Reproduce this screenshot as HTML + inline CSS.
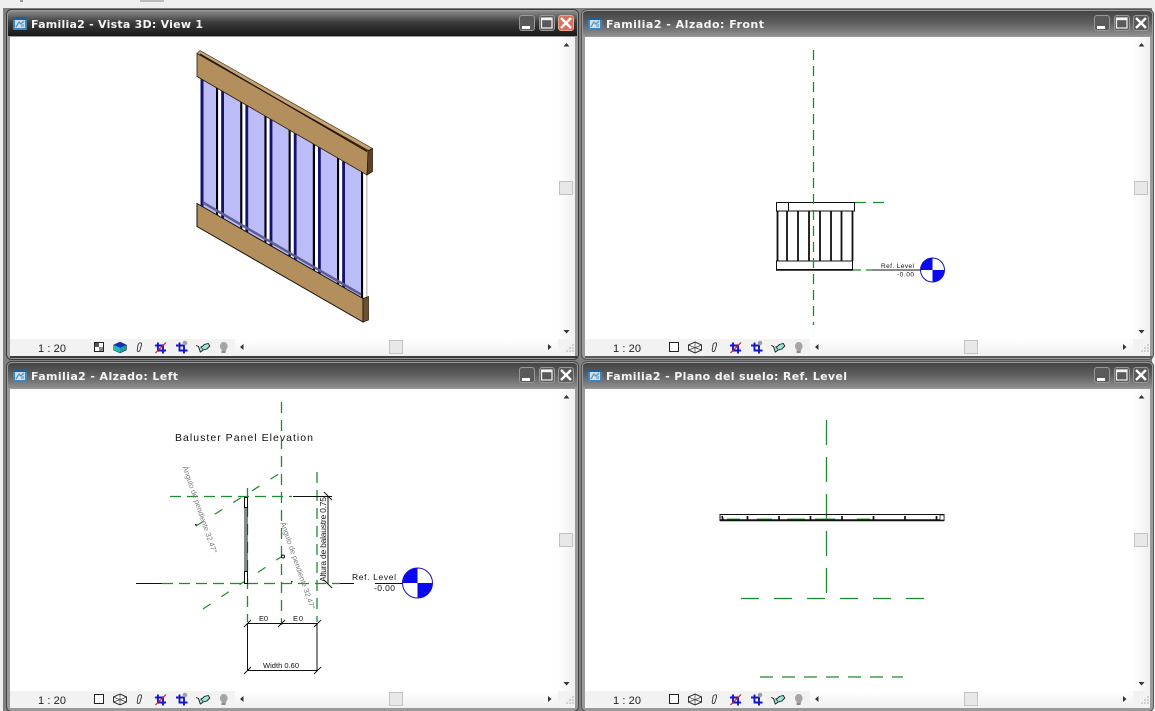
<!DOCTYPE html>
<html>
<head>
<meta charset="utf-8">
<title>Familia2</title>
<style>
html,body{margin:0;padding:0;background:#f0f0f0;overflow:hidden}
svg{display:block}
.t{font-family:"DejaVu Sans",sans-serif;font-weight:bold;font-size:11px;fill:#f4f4f4}
.s{font-family:"Liberation Sans",sans-serif;font-size:11px;fill:#222}
.l{font-family:"Liberation Sans",sans-serif;fill:#111}
.g{font-family:"Liberation Sans",sans-serif;font-size:7.500px;fill:#7c7c7c}
</style>
</head>
<body>
<svg width="1155" height="711" viewBox="0 0 1155 711" xmlns="http://www.w3.org/2000/svg">
<defs>
<linearGradient id="ta" x1="0" y1="0" x2="0" y2="1"><stop offset="0" stop-color="#8a8a8a"/><stop offset=".45" stop-color="#3c3c3c"/><stop offset="1" stop-color="#181818"/></linearGradient>
<linearGradient id="ti" x1="0" y1="0" x2="0" y2="1"><stop offset="0" stop-color="#444"/><stop offset=".5" stop-color="#606060"/><stop offset="1" stop-color="#8f8f8f"/></linearGradient>
<linearGradient id="sb" x1="0" y1="0" x2="1" y2="0"><stop offset="0" stop-color="#fff"/><stop offset="1" stop-color="#f0f0f0"/></linearGradient>
<linearGradient id="sh" x1="0" y1="0" x2="0" y2="1"><stop offset="0" stop-color="#fff"/><stop offset="1" stop-color="#f0f0f0"/></linearGradient>

<g id="appicon">
  <rect x="0" y="0" width="14" height="13" rx="1.500" fill="#3a86c0"/>
  <rect x="0" y="0" width="14" height="3" rx="1" fill="#1f5f98"/>
  <rect x="2" y="3" width="10" height="8" fill="#cfe0ee"/>
  <path d="M3 10l3-5 2 2 3-3" stroke="#5a93bd" stroke-width="1.300" fill="none"/>
  <rect x="8" y="7" width="3" height="3" fill="#8db4d2"/>
</g>

<g id="bmin"><rect x=".5" y=".5" width="15" height="15" rx="2.500" fill="#5a5a5a" stroke="#989898"/><rect x="3" y="11" width="8" height="3" fill="#fff"/></g>
<g id="bmax"><rect x=".5" y=".5" width="15" height="15" rx="2.500" fill="#5a5a5a" stroke="#989898"/><rect x="2.500" y="3" width="10.500" height="10" fill="none" stroke="#f4f4f4" stroke-width="1.200"/><rect x="2.500" y="3" width="10.500" height="2.200" fill="#f4f4f4"/></g>
<g id="bclose"><rect x=".5" y=".5" width="15" height="15" rx="2.500" fill="#5a5a5a" stroke="#989898"/><path d="M3 3l10 10M13 3L3 13" stroke="#fff" stroke-width="2.400"/></g>
<g id="bcloser"><rect x=".5" y=".5" width="15" height="15" rx="2.500" fill="#d9705c" stroke="#e8a598"/><path d="M3 3l10 10M13 3L3 13" stroke="#fff" stroke-width="2.400"/></g>

<g id="tools">
  <path d="M139.500 343c1.800-.6 2.500.4 2 2l-1.500 5c-.6 2-3 2.200-2.800 0l.8-5c.2-1 .6-1.600 1.500-2z" fill="none" stroke="#333" stroke-width=".9"/>
  <!-- crop off -->
  <path d="M158 342.500v8h8M155 345.500h8v8" fill="none" stroke="#1515c8" stroke-width="1.900"/>
  <path d="M155.500 353l10.500-10.500" stroke="#c02030" stroke-width="1.200"/>
  <!-- crop region -->
  <path d="M179.500 342.500v8h8M176 345.500h8v8" fill="none" stroke="#1515c8" stroke-width="1.900"/>
  <circle cx="185" cy="343" r="2.300" fill="#a0a0a0"/>
  <!-- glasses -->
  <path d="M196 345.500l2.500 1 1.800 5.500 3-2 3.500-1 3-3-1.500-2.500-4 1-2 2-2 .5" fill="#9ee6da" stroke="#1a1a1a" stroke-width=".9"/>
  <path d="M201 347l2 2.500" stroke="#1a1a1a" stroke-width=".7"/>
  <!-- bulb -->
  <path d="M223.500 342c3 0 4.500 2.500 4 5-.4 2-1.500 2.500-1.500 4.500h-4c0-2-2-3-2-5 0-2.500 1.500-4.500 3.500-4.500z" fill="#a4a4a4"/>
  <rect x="221.500" y="351" width="4" height="2" fill="#8a8a8a"/>
</g>

<g id="cubew">
  <path d="M120 342l6.500 3v5l-6.500 3-6.500-3v-5z" fill="#fff" stroke="#333" stroke-width="1"/>
  <path d="M113.500 345l6.500 2.800 6.500-2.800M120 342v11M113.500 350l6.500-2.500 6.500 2.500" fill="none" stroke="#333" stroke-width=".7"/>
</g>
<g id="cubes">
  <path d="M120 342l6.500 3v5l-6.500 3-6.500-3v-5z" fill="#1c9aa8" stroke="#123" stroke-width=".5"/>
  <path d="M113.500 345l6.500-3 6.500 3-6.500 2.800z" fill="#1530b0"/>
  <path d="M113.500 345l6.500 2.800v5l-6.500-3z" fill="#20b8b0"/>
</g>

<g id="scroll">
  <rect x="558" y="37" width="17" height="302" fill="url(#sb)"/>
  <path d="M563.500 46.500l3-3.500 3 3.500z" fill="#333"/>
  <path d="M563.500 330l3 3.500 3-3.500z" fill="#333"/>
  <rect x="559.500" y="181.500" width="13" height="13" fill="#e8e8e8" stroke="#c4c4c4"/>
  <rect x="10" y="339" width="565" height="17" fill="#f2f2f2"/>
  <rect x="235" y="339" width="323" height="17" fill="url(#sh)"/>
  <path d="M243.500 344l-3.500 3 3.500 3z" fill="#333"/>
  <path d="M548 344l3.500 3-3.500 3z" fill="#333"/>
  <rect x="389.500" y="340.500" width="13" height="13" fill="#e8e8e8" stroke="#c4c4c4"/>
  <path d="M572 344h2v2h-2zM569 347h2v2h-2zM572 347h2v2h-2zM566 350h2v2h-2zM569 350h2v2h-2zM572 350h2v2h-2z" fill="#cfcfcf"/>
</g>
</defs>

<rect width="1155" height="711" fill="#efefef"/>
<rect x="3" y="8" width="1149" height="703" fill="#808080"/>
<rect x="20" y="0" width="3" height="2" fill="#999"/>
<rect x="140" y="0" width="24" height="2" fill="#bbb"/>

<!-- WINDOW 1 -->
<rect x="6.500" y="9.500" width="572" height="350" rx="5" fill="#9a9a9a" stroke="#3a3a3a"/>
<path d="M8 36V15q0-4 4-4h561q4 0 4 4v21z" fill="url(#ta)"/>
<rect x="10" y="37" width="565" height="319" fill="#fff"/>
<rect x="10" y="356" width="567" height="2" fill="#3c3c3c"/>
<use href="#scroll"/>
<use href="#appicon" x="13" y="17"/>
<text class="t" x="31" y="28" textLength="172" lengthAdjust="spacing">Familia2 - Vista 3D: View 1</text>
<use href="#bmin" x="519" y="15"/><use href="#bmax" x="539" y="15"/><use href="#bcloser" x="558" y="15"/>
<text class="s" x="38" y="352" textLength="28" lengthAdjust="spacing">1 : 20</text>
<rect x="94.500" y="342.500" width="9" height="9" fill="#fff" stroke="#222"/><rect x="95" y="343" width="4" height="4" fill="#555"/><rect x="99" y="347" width="4" height="4" fill="#888"/>
<use href="#cubes"/><use href="#tools"/>

<!-- 3D model -->
<polygon points="197,68 362,168 362,298 197,205" fill="#bcbcf8"/>
<rect x="197" y="60" width="3.500" height="150" fill="#fff"/><rect x="200.500" y="60" width="3" height="150" fill="#14146e"/>
<g id="b1">
<rect x="216" y="70" width="2.200" height="164" fill="#000"/><rect x="218.200" y="70" width="3" height="164" fill="#fff"/><rect x="221.200" y="70" width="2.800" height="164" fill="#14146e"/>
</g>
<use href="#b1" x="24.200" y="14"/><use href="#b1" x="48.400" y="28"/><use href="#b1" x="72.600" y="42"/><use href="#b1" x="96.800" y="56"/><use href="#b1" x="121" y="70"/>
<rect x="361" y="160" width="2.200" height="142" fill="#000"/><rect x="363.200" y="160" width="3.800" height="142" fill="#fff"/><rect x="366.500" y="170" width=".8" height="130" fill="#999"/>
<path d="M203 202.500L361 294.500" stroke="#5e5e92" stroke-width="2.500" fill="none"/>
<!-- top rail -->
<polygon points="197,53.500 200,50.500 372.500,148.500 368.500,150.500" fill="#c7a273" stroke="#4a3418" stroke-width=".7"/>
<polygon points="197,53.500 368.500,151 367,175 197,76.500" fill="#b38f5e" stroke="#2a1c0a" stroke-width=".8"/>
<polygon points="368,151 372.500,148.500 372.500,171.500 367,175" fill="#5c4226" stroke="#1e1408" stroke-width=".7"/>
<path d="M200 54L367 151.500" stroke="#1a1208" stroke-width="1.100"/>
<!-- bottom rail -->
<polygon points="197,203.500 363,298.500 363,322 197,226.500" fill="#b38f5e" stroke="#15100a" stroke-width="1"/>
<polygon points="363,298.500 368.500,296.500 368.500,320 363,322" fill="#6d5030" stroke="#1e1408" stroke-width=".7"/>

<!-- WINDOW 2 -->
<rect x="581.500" y="9.500" width="572" height="350" rx="5" fill="#9a9a9a" stroke="#555"/>
<path d="M583 36V15q0-4 4-4h561q4 0 4 4v21z" fill="url(#ti)"/>
<g transform="translate(575 0)">
<rect x="10" y="37" width="565" height="319" fill="#fff"/>
<rect x="10" y="356" width="567" height="2" fill="#5a5a5a"/>
<use href="#scroll"/>
<use href="#appicon" x="13" y="17"/>
<text class="t" x="31" y="28" textLength="158" lengthAdjust="spacing">Familia2 - Alzado: Front</text>
<use href="#bmin" x="519" y="15"/><use href="#bmax" x="539" y="15"/><use href="#bclose" x="558" y="15"/>
<text class="s" x="38" y="352" textLength="28" lengthAdjust="spacing">1 : 20</text>
<rect x="94.500" y="342.500" width="9" height="9" fill="#fff" stroke="#222"/>
<use href="#cubew"/><use href="#tools"/>
</g>
<!-- front drawing -->
<g fill="none">
<path d="M776.500 202.500H854.500V211H776.500zM788.500 202.500V211M776.500 261H852.500V269.500H776.500z" stroke="#111"/>
<path d="M777.500 211V261M787 211V261M798 211V261M809 211V261M820 211V261M831 211V261M841.500 211V261M852.500 211V261" stroke="#111" stroke-width="1.800"/>
<path d="M776 270H853" stroke="#111" stroke-width="1.600"/>
<path d="M813.500 50V325" stroke="#1f8a2f" stroke-width="1.300" stroke-dasharray="10 6"/>
<path d="M855 202.500H886" stroke="#1f8a2f" stroke-width="1.300" stroke-dasharray="11 7"/>
<path d="M853 270H872" stroke="#1f8a2f" stroke-width="1.300" stroke-dasharray="8 5"/>
<path d="M872 270H921" stroke="#111"/>
</g>
<text class="l" font-size="6.500" x="881" y="268" textLength="33" lengthAdjust="spacing">Ref. Level</text>
<text class="l" font-size="6.500" x="897" y="276.500" textLength="17" lengthAdjust="spacing">-0.00</text>
<circle cx="932.500" cy="270" r="12" fill="#fff" stroke="#1414c0"/>
<path d="M932.500 270V258A12 12 0 0 0 920.500 270zM932.500 270V282A12 12 0 0 0 944.500 270z" fill="#0a0af0"/>

<!-- WINDOW 3 -->
<rect x="6.500" y="361.500" width="572" height="350" rx="5" fill="#9a9a9a" stroke="#444"/>
<path d="M8 388V367q0-4 4-4h561q4 0 4 4v21z" fill="url(#ti)"/>
<g transform="translate(0 352)">
<rect x="10" y="37" width="565" height="319" fill="#fff"/>
<use href="#scroll"/>
<use href="#appicon" x="13" y="17"/>
<text class="t" x="31" y="28" textLength="147" lengthAdjust="spacing">Familia2 - Alzado: Left</text>
<use href="#bmin" x="519" y="15"/><use href="#bmax" x="539" y="15"/><use href="#bclose" x="558" y="15"/>
<text class="s" x="38" y="352" textLength="28" lengthAdjust="spacing">1 : 20</text>
<rect x="94.500" y="342.500" width="9" height="9" fill="#fff" stroke="#222"/>
<use href="#cubew"/><use href="#tools"/>
</g>
<!-- left drawing -->
<text class="l" font-size="10.500" x="175" y="441" textLength="138" lengthAdjust="spacing">Baluster Panel Elevation</text>
<g fill="none">
<path d="M281.500 402V625" stroke="#1f8a2f" stroke-width="1.300" stroke-dasharray="11 7"/>
<path d="M247.500 488V622M317 472V622" stroke="#1f8a2f" stroke-width="1.300" stroke-dasharray="11 7"/>
<path d="M170 496.500H292" stroke="#1f8a2f" stroke-width="1.300" stroke-dasharray="11 6"/>
<path d="M162 583.500H340" stroke="#1f8a2f" stroke-width="1.300" stroke-dasharray="11 6"/>
<path d="M196 526L285 470M203 609L284 555" stroke="#1f8a2f" stroke-width="1.200" stroke-dasharray="9 13"/>
<path d="M136 583.500H162M293 496.500H332M340 583.500H354M375 583.500H403" stroke="#111"/>
<path d="M245 507V571M247 507V571" stroke="#111"/>
<rect x="244.500" y="497.500" width="3" height="10" stroke="#111" fill="#fff"/>
<rect x="244.500" y="571.500" width="3" height="12" stroke="#111" fill="#fff"/>
<path d="M328 496V584" stroke="#111"/>
<path d="M247.500 623.500H317M247.500 670.500H317M247.500 623V671M317 623V671" stroke="#111"/>
<path d="M324 492l8 8M324 580l8 8M244 627l7-7M278 627l7-7M314 627l7-7M244 674l7-7M314 674l7-7" stroke="#111" stroke-width=".9"/>
<circle cx="283" cy="556.500" r="1.500" stroke="#111" fill="#fff"/>
</g>
<rect x="195" y="524" width="1.500" height="1.500" fill="#111"/>
<rect x="291" y="581" width="1.500" height="1.500" fill="#111"/>
<text class="g" transform="translate(182.500 467) rotate(71)" textLength="92" lengthAdjust="spacing">Ángulo de pendiente 32.47°</text>
<text class="g" transform="translate(280.500 523) rotate(71)" textLength="92" lengthAdjust="spacing">Ángulo de pendiente 32.47°</text>
<text class="l" font-size="8.500" transform="translate(326 582) rotate(-90)" textLength="85" lengthAdjust="spacing">Altura de balaustre 0.75</text>
<text class="l" font-size="7.500" x="259" y="621" textLength="9" lengthAdjust="spacing">E0</text>
<text class="l" font-size="7.500" x="293" y="621" textLength="10" lengthAdjust="spacing">E0</text>
<text class="l" font-size="7.500" x="263" y="668" textLength="36" lengthAdjust="spacing">Width 0.60</text>
<text class="l" font-size="8.500" x="352" y="580" textLength="44" lengthAdjust="spacing">Ref. Level</text>
<text class="l" font-size="8.500" x="374" y="591" textLength="21" lengthAdjust="spacing">-0.00</text>
<circle cx="417.500" cy="583" r="15" fill="#fff" stroke="#1414c0"/>
<path d="M417.500 583V568A15 15 0 0 0 402.500 583zM417.500 583V598A15 15 0 0 0 432.500 583z" fill="#0a0af0"/>

<!-- WINDOW 4 -->
<rect x="581.500" y="361.500" width="572" height="350" rx="5" fill="#9a9a9a" stroke="#555"/>
<path d="M583 388V367q0-4 4-4h561q4 0 4 4v21z" fill="url(#ti)"/>
<g transform="translate(575 352)">
<rect x="10" y="37" width="565" height="319" fill="#fff"/>
<use href="#scroll"/>
<use href="#appicon" x="13" y="17"/>
<text class="t" x="31" y="28" textLength="241" lengthAdjust="spacing">Familia2 - Plano del suelo: Ref. Level</text>
<use href="#bmin" x="519" y="15"/><use href="#bmax" x="539" y="15"/><use href="#bclose" x="558" y="15"/>
<text class="s" x="38" y="352" textLength="28" lengthAdjust="spacing">1 : 20</text>
<rect x="94.500" y="342.500" width="9" height="9" fill="#fff" stroke="#222"/>
<use href="#cubew"/><use href="#tools"/>
</g>
<!-- plan drawing -->
<g fill="none">
<path d="M826.500 420V600" stroke="#1f8a2f" stroke-width="1.300" stroke-dasharray="25 12"/>
<path d="M741 598.500H925" stroke="#1f8a2f" stroke-width="1.300" stroke-dasharray="18 15"/>
<path d="M760 677H903" stroke="#1f8a2f" stroke-width="1.300" stroke-dasharray="13 9"/>
<path d="M727 519H740M757 519H772M787 519H805M815 519H835M857 519H870" stroke="#4a9a4a" stroke-width="1"/>
<rect x="720" y="514.500" width="224" height="6" stroke="#111"/>
<path d="M720 520.300H944" stroke="#111" stroke-width="2"/>
<path d="M722 516l1 4M747.500 516v4M779 516v4M810.500 516v4M842 516v4M873.500 516v4M905 516v4M936.500 516v4" stroke="#111" stroke-width="1.700"/>
</g>
<rect x="940" y="515" width="4" height="5" fill="#fff" stroke="#111" stroke-width=".7"/>
</svg>
</body>
</html>
